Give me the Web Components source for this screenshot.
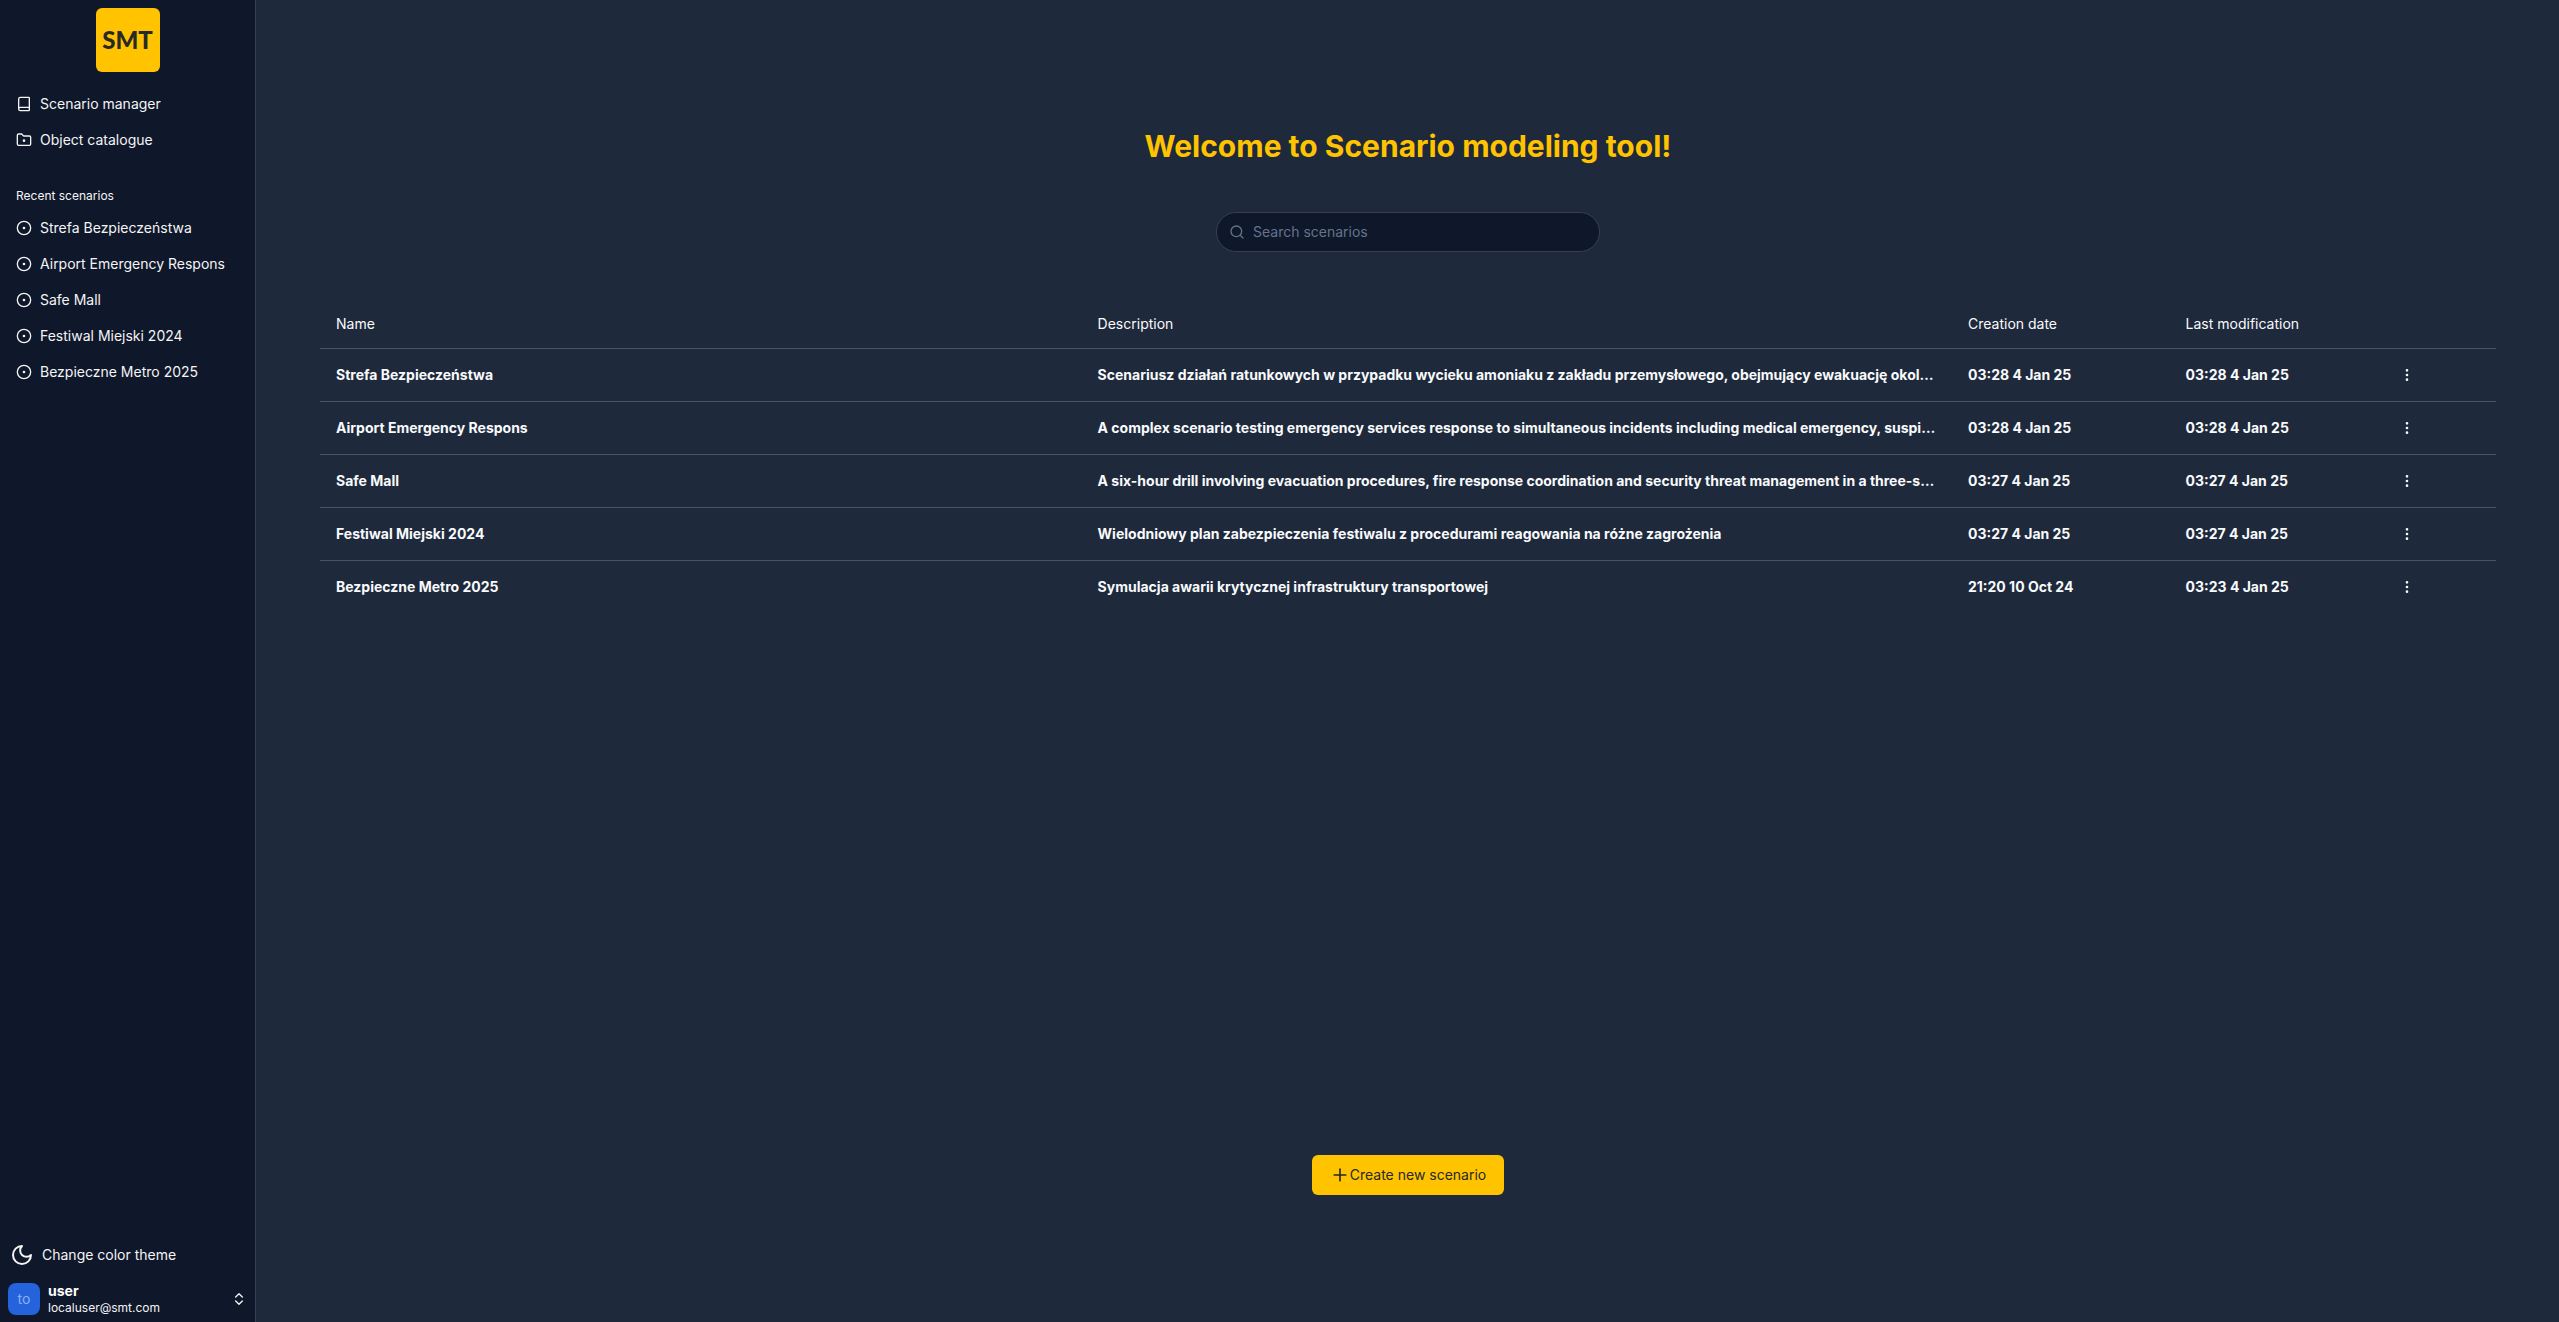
<!DOCTYPE html>
<html lang="en">
<head>
<meta charset="utf-8">
<meta name="viewport" content="width=device-width, initial-scale=1">
<title>Scenario modeling tool</title>
<style>
  :root {
    --bg: #1e293b;
    --panel: #0f172a;
    --edge: #334155;
    --rule: #475569;
    --text: #f8fafc;
    --muted: #64748b;
    --brand: #ffc300;
    --ink: #292929;
  }
  body {
    margin: 0;
    background: var(--bg);
    color: var(--text);
    font: 400 14px/20px Inter, "Liberation Sans", sans-serif;
  }
</style>
</head>
<body>
<smt-app>
  <smt-sidebar slot="sidebar">
    <smt-nav-item icon="book">Scenario manager</smt-nav-item>
    <smt-nav-item icon="folder">Object catalogue</smt-nav-item>
    <smt-nav-item slot="recent" icon="dot">Strefa Bezpieczeństwa</smt-nav-item>
    <smt-nav-item slot="recent" icon="dot">Airport Emergency Respons</smt-nav-item>
    <smt-nav-item slot="recent" icon="dot">Safe Mall</smt-nav-item>
    <smt-nav-item slot="recent" icon="dot">Festiwal Miejski 2024</smt-nav-item>
    <smt-nav-item slot="recent" icon="dot">Bezpieczne Metro 2025</smt-nav-item>
    <smt-theme-toggle slot="footer">Change color theme</smt-theme-toggle>
    <smt-user slot="footer" initials="to" name="user" email="localuser@smt.com"></smt-user>
  </smt-sidebar>
  <smt-search></smt-search>
  <smt-scenario-table></smt-scenario-table>
  <smt-create-button slot="action">Create new scenario</smt-create-button>
</smt-app>

<script>
const ICONS = {
  book: '<path d="M4 19.5v-15A2.5 2.5 0 0 1 6.5 2H19a1 1 0 0 1 1 1v18a1 1 0 0 1-1 1H6.500a1 1 0 0 1 0-5H20"/>',
  folder: '<path d="M4 20h16a2 2 0 0 0 2-2V8a2 2 0 0 0-2-2h-7.930a2 2 0 0 1-1.660-.9l-.82-1.200A2 2 0 0 0 7.930 3H4a2 2 0 0 0-2 2v13c0 1.100.9 2 2 2Z"/><circle cx="12" cy="13" r="1"/>',
  dot: '<circle cx="12" cy="12" r="10"/><circle cx="12" cy="12" r="1"/>',
  moon: '<path d="M12 3a6 6 0 0 0 9 9 9 9 0 1 1-9-9Z"/>',
  updown: '<path d="m7 15 5 5 5-5"/><path d="m7 9 5-5 5 5"/>',
  search: '<circle cx="11" cy="11" r="8"/><path d="m21 21-4.300-4.300"/>',
  plus: '<path d="M5 12h14"/><path d="M12 5v14"/>',
  more: '<circle cx="12" cy="12" r="1"/><circle cx="12" cy="5" r="1"/><circle cx="12" cy="19" r="1"/>'
};
const icon = (name, size) =>
  `<svg width="${size}" height="${size}" viewBox="0 0 24 24" fill="none" stroke="currentColor" stroke-width="2" stroke-linecap="round" stroke-linejoin="round" aria-hidden="true">${ICONS[name]}</svg>`;

const BASE = `*{box-sizing:border-box} svg{display:block;flex:none}
  a{color:inherit;text-decoration:none}
  button{font:inherit;color:inherit;background:none;border:0;margin:0;padding:0;cursor:pointer}`;

function define(tag, render) {
  customElements.define(tag, class extends HTMLElement {
    connectedCallback() {
      if (this.shadowRoot) return;
      const t = document.createElement('template');
      t.innerHTML = render(this);
      this.attachShadow({ mode: 'open' }).append(t.content.cloneNode(true));
    }
  });
}

define('smt-app', () => `<style>${BASE}
  :host{display:flex;min-height:100vh}
  main{flex:1;min-width:0;display:flex;flex-direction:column;align-items:center;padding:128px 63px 127px 64px}
  h1{margin:0;font-size:30px;line-height:36px;font-weight:700;color:var(--brand)}
  .content{flex:1;align-self:stretch;display:flex;flex-direction:column;align-items:center;gap:48px;padding-top:48px}
</style>
<slot name="sidebar"></slot>
<main>
  <h1>Welcome to Scenario modeling tool!</h1>
  <div class="content"><slot></slot></div>
  <slot name="action"></slot>
</main>`);

define('smt-sidebar', () => `<style>${BASE}
  :host{box-sizing:border-box;flex:none;display:flex;flex-direction:column;width:256px;background:var(--panel);border-right:1px solid var(--edge);color:#f4f4f5}
  .logo{align-self:center;display:grid;place-items:center;width:64px;height:64px;margin-top:8px;border-radius:6px;background:var(--brand);color:var(--ink);font:900 24px/32px Lato,"Open Sans",sans-serif}
  nav{display:flex;flex-direction:column;gap:4px;padding:16px 8px}
  nav + nav{gap:0;padding:8px}
  .recent{display:flex;flex-direction:column;gap:4px}
  h2{margin:0;padding:0 8px;font-size:12px;line-height:32px;font-weight:400}
  .spacer{flex:1}
  footer{display:flex;flex-direction:column}
</style>
<div class="logo">SMT</div>
<nav aria-label="Main"><slot></slot></nav>
<nav aria-label="Recent scenarios"><h2>Recent scenarios</h2><div class="recent"><slot name="recent"></slot></div></nav>
<div class="spacer"></div>
<footer><slot name="footer"></slot></footer>`);

define('smt-nav-item', el => `<style>${BASE}
  :host{display:block}
  a{display:flex;align-items:center;gap:8px;height:32px;padding:0 8px;white-space:nowrap}
</style><a href="#">${icon(el.getAttribute('icon'), 16)}<slot></slot></a>`);

define('smt-theme-toggle', () => `<style>${BASE}
  :host{display:block}
  button{display:flex;align-items:center;gap:8px;width:100%;height:42px;padding:0 10px}
</style><button type="button">${icon('moon', 24)}<slot></slot></button>`);

define('smt-user', el => `<style>${BASE}
  :host{display:block}
  button{display:flex;align-items:center;gap:8px;width:100%;height:46px;padding:0 8px;text-align:left}
  .avatar{flex:none;display:grid;place-items:center;width:32px;height:32px;border-radius:8px;background:#2463dc;color:#8bb0f2}
  .who{flex:1;display:grid}
  strong{line-height:18px;font-weight:700;color:#fff}
  small{font-size:12px;line-height:16px}
</style><button type="button" aria-label="Account">
  <span class="avatar">${el.getAttribute('initials')}</span>
  <span class="who"><strong>${el.getAttribute('name')}</strong><small>${el.getAttribute('email')}</small></span>
  ${icon('updown', 16)}
</button>`);

define('smt-search', () => `<style>${BASE}
  :host{display:block;width:384px;max-width:100%}
  label{display:flex;align-items:center;gap:8px;height:40px;padding:0 12px;border:1px solid var(--edge);border-radius:20px;background:var(--panel);color:var(--muted)}
  input{flex:1;min-width:0;padding:0;border:0;outline:0;background:none;font:inherit;color:var(--text)}
  input::placeholder{color:var(--muted);opacity:1}
</style><label>${icon('search', 16)}<input type="text" placeholder="Search scenarios" aria-label="Search scenarios"></label>`);

const ROWS = [
  ['Strefa Bezpieczeństwa', 'Scenariusz działań ratunkowych w przypadku wycieku amoniaku z zakładu przemysłowego, obejmujący ewakuację okol…', '03:28 4 Jan 25', '03:28 4 Jan 25'],
  ['Airport Emergency Respons', 'A complex scenario testing emergency services response to simultaneous incidents including medical emergency, suspi…', '03:28 4 Jan 25', '03:28 4 Jan 25'],
  ['Safe Mall', 'A six-hour drill involving evacuation procedures, fire response coordination and security threat management in a three-s…', '03:27 4 Jan 25', '03:27 4 Jan 25'],
  ['Festiwal Miejski 2024', 'Wielodniowy plan zabezpieczenia festiwalu z procedurami reagowania na różne zagrożenia', '03:27 4 Jan 25', '03:27 4 Jan 25'],
  ['Bezpieczne Metro 2025', 'Symulacja awarii krytycznej infrastruktury transportowej', '21:20 10 Oct 24', '03:23 4 Jan 25']
];

define('smt-scenario-table', () => `<style>${BASE}
  :host{display:block;align-self:stretch}
  table{width:100%;table-layout:fixed;border-collapse:separate;border-spacing:0}
  .name{width:35%} .desc{width:40%} .date{width:10%} .menu{width:5%}
  th,td{padding:0 16px;text-align:left;vertical-align:middle;white-space:nowrap;overflow:hidden;text-overflow:ellipsis}
  th{height:49px;font-weight:400;border-bottom:1px solid var(--rule)}
  td{height:53px;font-weight:700;border-bottom:1px solid var(--rule)}
  tbody tr:last-child td{border-bottom-color:transparent}
  button{display:flex;justify-content:center;width:8px;height:20px;align-items:center}
</style>
<table>
  <colgroup><col class="name"><col class="desc"><col class="date"><col class="date"><col class="menu"></colgroup>
  <thead><tr><th scope="col">Name</th><th scope="col">Description</th><th scope="col">Creation date</th><th scope="col">Last modification</th><th></th></tr></thead>
  <tbody>${ROWS.map(r => `<tr>${r.map(c => `<td>${c}</td>`).join('')}<td><button type="button" aria-label="Actions">${icon('more', 16)}</button></td></tr>`).join('')}</tbody>
</table>`);

define('smt-create-button', () => `<style>${BASE}
  :host{display:block}
  button{display:flex;align-items:center;justify-content:center;height:40px;padding:0 18px;border-radius:6px;background:var(--brand);color:var(--ink)}
</style><button type="button">${icon('plus', 20)}<slot></slot></button>`);
</script>
</body>
</html>
